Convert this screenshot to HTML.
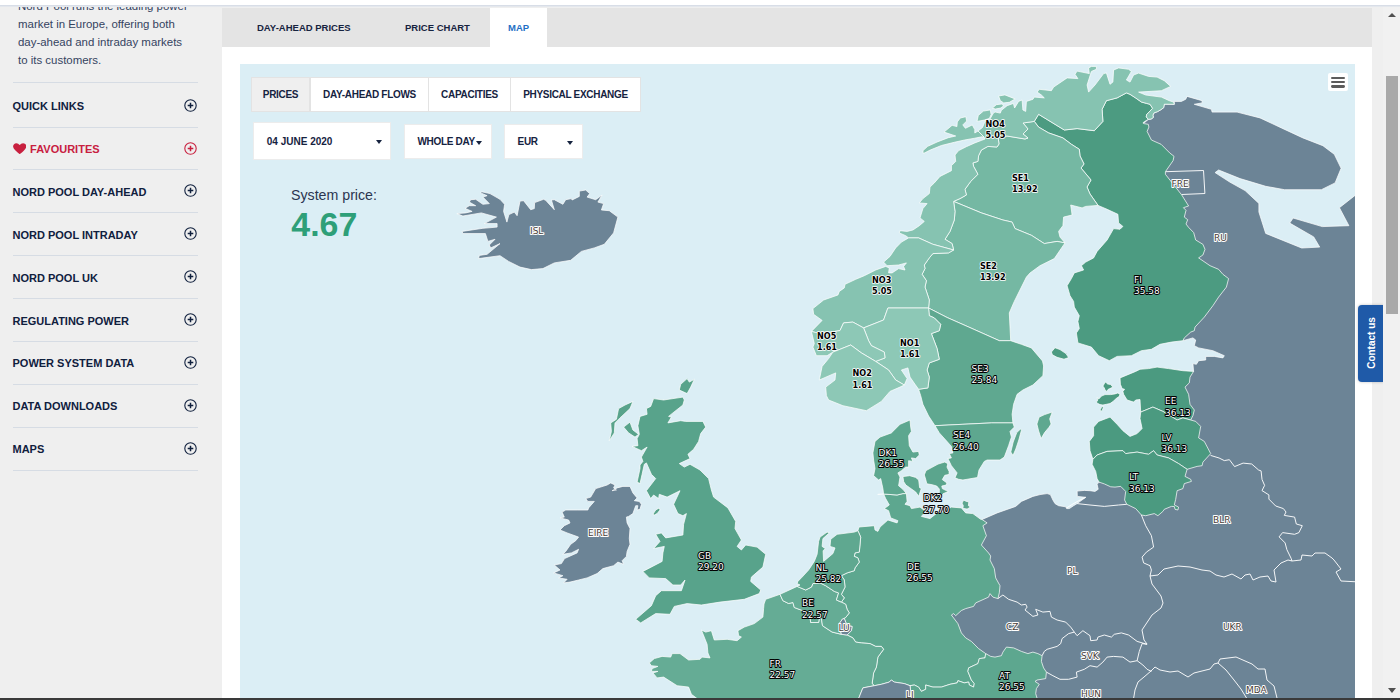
<!DOCTYPE html>
<html lang="en">
<head>
<meta charset="utf-8">
<title>Nord Pool - Map</title>
<style>
*{box-sizing:border-box;margin:0;padding:0}
html,body{width:1400px;height:700px;overflow:hidden;background:#efefef;font-family:"Liberation Sans",Arial,sans-serif}
#page{position:relative;width:1400px;height:700px;overflow:hidden;background:#efefef}
#topstrip{position:absolute;left:0;top:0;width:1400px;height:7px;background:linear-gradient(#fff 0,#fff 5px,#d3d9e4 5px,#dde2ea 6px,#ebedf0 7px);z-index:5}
#content{position:absolute;left:222px;top:8px;width:1150px;height:692px;background:#fff}
#tabbar{position:absolute;left:222px;top:8px;width:1150px;height:39px;background:#e4e4e4}
.tab{position:absolute;top:0;height:39px;line-height:40.4px;font-weight:bold;font-size:9.5px;color:#16233f;white-space:nowrap}
#tabmap{position:absolute;left:268px;top:0;width:57px;height:39px;background:#fff}
#side{position:absolute;left:0;top:0;width:222px;height:700px;background:#efefef;overflow:hidden}
#intro{position:absolute;left:18px;top:-3px;width:200px;font-size:11.45px;line-height:18px;color:#35435f}
.sdiv{position:absolute;left:12.5px;width:185px;height:1px;background:#d6dce4}
.sitem{position:absolute;left:12.5px;width:185px;height:14px}
.sitem span{position:absolute;left:0;top:0;line-height:14px;font-weight:bold;font-size:11px;color:#10203e;white-space:nowrap}
.sitem svg{position:absolute;left:171.2px;top:-0.4px}
#map{position:absolute;left:240px;top:64px;width:1115.3px;height:636px;background:#dbeef5;overflow:hidden}
.sub{position:absolute;top:76.5px;height:35px;line-height:34.6px;letter-spacing:-0.3px;background:#fff;border:1px solid #e3e3e3;font-weight:bold;font-size:10px;color:#16233f;text-align:center;white-space:nowrap}
.dd{position:absolute;height:36px;background:#fff;border:1px solid #ececec;font-weight:bold;font-size:10px;letter-spacing:-0.3px;color:#16233f;line-height:34px;white-space:nowrap}
.caret{position:absolute;top:16px;width:0;height:0;border-left:3.5px solid transparent;border-right:3.5px solid transparent;border-top:4px solid #16233f}
#sp1{position:absolute;left:291px;top:187.2px;font-size:14.2px;color:#2b3550;white-space:nowrap}
#sp2{position:absolute;left:291.3px;top:205.2px;font-size:33.9px;font-weight:bold;color:#2e9f78;white-space:nowrap}
#burger{position:absolute;left:1328px;top:73px;width:20px;height:18px;background:#fff;border-radius:2px}
#burger i{position:absolute;left:3px;width:14px;height:2.7px;background:#5c5c5c;border-radius:1.4px}
#sbar{position:absolute;left:1383px;top:6px;width:17px;height:694px;background:#f1f1f1}
#thumb{position:absolute;left:3.3px;top:69.5px;width:12px;height:238.5px;background:#a9a9a9}
.arr{position:absolute;left:4.5px;width:0;height:0;border-left:4px solid transparent;border-right:4px solid transparent}
#contact{position:absolute;left:1358.4px;top:305px;width:26px;height:77px;background:#1f5aa8;border-radius:4px 0 0 4px;box-shadow:0 0 3px rgba(0,0,0,.25)}
#contact span{position:absolute;left:13px;top:38px;transform:translate(-50%,-50%) rotate(-90deg);color:#fff;font-weight:bold;font-size:10px;white-space:nowrap}
#botbar{position:absolute;left:0;top:698px;width:1400px;height:2px;background:#3a3a3a;z-index:9}
svg#m{position:absolute;left:0;top:0}
svg#m path{stroke:#fff;stroke-opacity:.8;stroke-width:.9;stroke-linejoin:round}
svg#m .gb path{stroke-opacity:.92;stroke-width:1}
svg#m text{font-family:"DejaVu Sans Condensed","DejaVu Sans","Liberation Sans",sans-serif;font-size:9px;font-weight:bold;paint-order:stroke;stroke-linejoin:round}
svg#m .lw{fill:#fff;stroke:#000;stroke-width:2px;font-family:"DejaVu Sans",sans-serif;font-weight:normal}
svg#m .lb{fill:#000;stroke:#fff;stroke-width:1.6px}
svg#m .lg{fill:#4a4038;stroke:#fff;stroke-width:2px;font-family:"DejaVu Sans",sans-serif;font-weight:normal}
</style>
</head>
<body>
<div id="page">
 <div id="side">
  <div id="intro">Nord Pool runs the leading power<br>market in Europe, offering both<br>day-ahead and intraday markets<br>to its customers.</div>
  <div class="sdiv" style="top:81.5px"></div>
  <div class="sitem" style="top:99.10px"><span>QUICK LINKS</span><svg width="13" height="13" viewBox="0 0 13 13"><circle cx="6.5" cy="6.5" r="5.7" fill="none" stroke="#10203e" stroke-width="1.1"/><path d="M3.7 6.5h5.6M6.5 3.7v5.6" stroke="#10203e" stroke-width="1.5" fill="none"/></svg></div>
  <div class="sdiv" style="top:126.50px"></div>
  <div class="sitem" style="top:141.98px"><svg style="left:0;top:1px" width="13.4" height="11.4" viewBox="0 0 13 11"><path d="M6.5 10.8C2 7.4 0.1 5.3 0.1 3.2 0.1 1.4 1.5 0.1 3.2 0.1c1.3 0 2.5 0.7 3.3 1.9C7.3 0.8 8.5 0.1 9.8 0.1c1.7 0 3.1 1.3 3.1 3.1 0 2.1-1.9 4.2-6.4 7.6z" fill="#c8203f"/></svg><span style="left:17.6px;color:#c8203f">FAVOURITES</span><svg width="13" height="13" viewBox="0 0 13 13"><circle cx="6.5" cy="6.5" r="5.7" fill="none" stroke="#c8203f" stroke-width="1.1"/><path d="M3.7 6.5h5.6M6.5 3.7v5.6" stroke="#c8203f" stroke-width="1.5" fill="none"/></svg></div>
  <div class="sdiv" style="top:169.38px"></div>
  <div class="sitem" style="top:184.86px"><span>NORD POOL DAY-AHEAD</span><svg width="13" height="13" viewBox="0 0 13 13"><circle cx="6.5" cy="6.5" r="5.7" fill="none" stroke="#10203e" stroke-width="1.1"/><path d="M3.7 6.5h5.6M6.5 3.7v5.6" stroke="#10203e" stroke-width="1.5" fill="none"/></svg></div>
  <div class="sdiv" style="top:212.26px"></div>
  <div class="sitem" style="top:227.74px"><span>NORD POOL INTRADAY</span><svg width="13" height="13" viewBox="0 0 13 13"><circle cx="6.5" cy="6.5" r="5.7" fill="none" stroke="#10203e" stroke-width="1.1"/><path d="M3.7 6.5h5.6M6.5 3.7v5.6" stroke="#10203e" stroke-width="1.5" fill="none"/></svg></div>
  <div class="sdiv" style="top:255.14px"></div>
  <div class="sitem" style="top:270.62px"><span>NORD POOL UK</span><svg width="13" height="13" viewBox="0 0 13 13"><circle cx="6.5" cy="6.5" r="5.7" fill="none" stroke="#10203e" stroke-width="1.1"/><path d="M3.7 6.5h5.6M6.5 3.7v5.6" stroke="#10203e" stroke-width="1.5" fill="none"/></svg></div>
  <div class="sdiv" style="top:298.02px"></div>
  <div class="sitem" style="top:313.50px"><span>REGULATING POWER</span><svg width="13" height="13" viewBox="0 0 13 13"><circle cx="6.5" cy="6.5" r="5.7" fill="none" stroke="#10203e" stroke-width="1.1"/><path d="M3.7 6.5h5.6M6.5 3.7v5.6" stroke="#10203e" stroke-width="1.5" fill="none"/></svg></div>
  <div class="sdiv" style="top:340.90px"></div>
  <div class="sitem" style="top:356.38px"><span>POWER SYSTEM DATA</span><svg width="13" height="13" viewBox="0 0 13 13"><circle cx="6.5" cy="6.5" r="5.7" fill="none" stroke="#10203e" stroke-width="1.1"/><path d="M3.7 6.5h5.6M6.5 3.7v5.6" stroke="#10203e" stroke-width="1.5" fill="none"/></svg></div>
  <div class="sdiv" style="top:383.78px"></div>
  <div class="sitem" style="top:399.26px"><span>DATA DOWNLOADS</span><svg width="13" height="13" viewBox="0 0 13 13"><circle cx="6.5" cy="6.5" r="5.7" fill="none" stroke="#10203e" stroke-width="1.1"/><path d="M3.7 6.5h5.6M6.5 3.7v5.6" stroke="#10203e" stroke-width="1.5" fill="none"/></svg></div>
  <div class="sdiv" style="top:426.66px"></div>
  <div class="sitem" style="top:442.14px"><span>MAPS</span><svg width="13" height="13" viewBox="0 0 13 13"><circle cx="6.5" cy="6.5" r="5.7" fill="none" stroke="#10203e" stroke-width="1.1"/><path d="M3.7 6.5h5.6M6.5 3.7v5.6" stroke="#10203e" stroke-width="1.5" fill="none"/></svg></div>
  <div class="sdiv" style="top:469.54px"></div>
 </div>
 <div id="content"></div>
 <div id="tabbar">
  <div id="tabmap"></div>
  <div class="tab" style="left:35px">DAY-AHEAD PRICES</div>
  <div class="tab" style="left:183px">PRICE CHART</div>
  <div class="tab" style="left:286px;color:#1f6fc5">MAP</div>
 </div>
 <div id="map">
  <svg id="m" width="1116" height="636" viewBox="240 64 1116 636">
<path fill="#6c8496" d="M1174.3,104.3L1174.3,101.4 1181.4,101.4 1185.7,99.3 1187.1,96.4 1202.1,100.7 1202.1,102.9 1194.3,104.3 1211.4,109.3 1212.1,112.1 1237.1,112.1 1260,117.9 1281.4,127.9 1302.9,137.9 1322.9,145.7 1334.3,154.3 1341.1,168.3 1335.1,182.9 1321.4,189.7 1284.6,189.7 1265.7,186.3 1240,178.6 1218.6,170 1215.1,172.6 1229.7,182 1245.1,190.6 1258.9,203.4 1258.9,212 1265.7,233.4 1301.7,248 1319.7,247.1 1313.7,236.9 1289.7,223.1 1293.1,218 1322.3,226.6 1348.9,225.7 1339.4,207.7 1355.7,194.9 1362,190 1362,706 1030,706 1030,690 1000,675 940,645 940,610 975,585 970,540 982,519.5 997.1,512.9 1015.7,506.4 1021.4,501.4 1032.9,496.4 1040,494.6 1047.1,493.6 1050.4,494.6 1052.9,500 1055,503.6 1058.6,505.7 1065.7,506.8 1066.8,508.6 1069.3,508.6 1073.6,505.7 1077.1,503.6 1085.7,497.3 1077.3,496.4 1077.1,491.1 1084.3,490.4 1090,490.7 1095,491.4 1098.2,489.3 1097.1,484.3 1099,482.1 1130,470 1150,440 1165,395 1193.6,371.4 1192.9,363.6 1196.4,364.3 1198.6,360.7 1205.7,360 1205.7,356.4 1214.3,356.4 1222.9,357.9 1224.3,355.7 1212.9,350.7 1198.6,347.9 1194.3,345.7 1195.7,340 1192.9,337.9 1182.9,340.7 1150,300 1125,140 1148.3,119.3 1151.1,119.1 1153.4,117.4 1152.9,115.1 1154,112.9 1157.4,111.7 1160.9,109.7 1163.7,107.7 1164.3,104.2 1174.3,104.3Z"/>
<g fill="none" class="gb"><path d="M1077.1,503.6L1090,505 1104.3,506.4 1118.6,505 1126.8,504.3"/><path d="M1141.4,515L1145.7,525.7 1151.4,535.7 1153.6,547.1 1146.4,552.1 1142.1,557.1 1143.6,562.9 1150,565.7 1151.4,570 1150,576"/><path d="M1150,576L1158,575 1164,569 1178,566 1190,567 1202,570 1210,571 1216,575 1224,577 1232,574 1241,579 1245,575 1250,574 1253,580 1260,577 1268,576 1271,581 1276,582 1275,576 1274,570 1281,563 1288,560 1292,561"/><path d="M1150,576L1152,584 1161,596 1163,603 1161,608 1152,615 1142,630 1144,640 1147,644"/><path d="M997.9,598.6L1002.9,595 1008.6,599.3 1017.1,602.1 1021.4,605 1025.7,604.3 1027.1,607.1 1025,610 1032.9,616.4 1037.9,615 1035.7,609.3 1042.9,612.1 1050,611.4 1051.4,617.1 1057.1,620 1065.7,622.1 1070.7,627.1 1074.3,632.1"/><path d="M1074.3,632.1L1077.1,635.7 1082.9,630.7 1090,635.7 1090.7,640.7 1097.1,640 1097.9,637.1 1104.3,635 1111.4,637.1 1114.3,634.3 1121.4,632.9 1128.6,635 1137.1,641.4 1147.1,644.3"/><path d="M1042.1,655.7L1044.3,651.4 1047.1,649.3 1057.1,646.4 1060.7,643.6 1062.1,638.6 1068.6,633.6 1074.3,632.1"/><path d="M1046.4,672.1L1052.9,675.7 1060,679.3 1068.6,679.3 1077.1,677.1 1076.4,672.1 1084.3,669.3 1090,665.7 1097.1,667.1 1102.9,662.1 1107.1,657.1 1113.6,656.4 1122.9,657.1 1130,662.1 1137.1,660.7"/><path d="M1147.1,644.3L1142.1,643.6 1139.3,651.4 1137.1,660.7"/><path d="M1137.1,660.7L1142.9,665 1147.1,669.3 1151.4,671.4"/><path d="M1151,671L1155,667 1160,670 1170,672 1178,671 1188,677 1194,673 1210,669 1214,664 1218,663"/><path d="M1218,663L1220,659 1236,657 1252,664 1258,669 1265,669 1267,680 1274,686 1278,702"/><path d="M1218,663L1226,670 1234,680 1241,689 1249,702"/><path d="M1151,671L1144,677 1138,682 1135,690 1133,702"/><path d="M1210.6,455.4L1219.1,458 1224.3,460.6 1229.4,459.7 1234.6,466.6 1243.1,463.1 1251.7,464 1258.6,470 1261.1,470.9 1262,479.4 1264.6,485.4 1262,490.6 1268.9,494.9 1268.9,499.1 1275.7,506 1283.4,508.6 1286,512 1284.3,515.4 1294.6,517.1 1296.3,524 1302.3,525.7 1298.9,532.6 1294.6,534.3 1282.6,532.6 1279.1,536.9 1285.1,542.9 1286.9,549.7 1291.1,558.3 1292,561"/><path d="M1292,561L1301,560 1302,555 1312,556 1315,553 1325,553 1332,558 1334,560 1341,569 1336,572 1341,581 1360,582"/><path d="M1066.2,508.2L1072,504.5 1078.5,500.8 1085.7,497.3"/><path d="M877.6,494.4L883.6,494"/><path d="M1165.4,171.7L1203.5,170.5 1204.9,193.5 1181.7,194.5"/></g>
<path fill="#6c8496" d="M504.6,204.3L500,199.3 490,193.6 481.4,191.7 480.7,192.9 487.1,195.7 482.9,197.1 489.3,203.6 482.9,204.3 475.7,199.3 470.7,199.7 469.3,202.1 475.7,205.7 469.3,205.7 465,208.3 472.1,211.4 465.7,212.9 456.9,213.6 462.9,216 481.4,212.9 496.4,217.1 484.3,223.6 497.1,223.6 497.1,227.1 482.9,228.3 462.1,231.4 462.9,233.6 485.4,233.6 487.9,241.4 495,239.3 489.3,245 490.7,247.9 500,243.6 487.1,254.3 479.3,255.4 478.6,258.6 500,255.7 508.6,261.4 520,267.1 531.4,269.6 542.9,268.6 554.3,262.9 570.7,260.3 581.4,251.4 594.3,247.9 604.3,244.3 613.6,232.9 617.9,217.1 609.3,210.7 601.4,210 603.6,203.6 597.9,202.1 602.1,195 595.7,199.7 587.1,197.1 589.7,193.6 585.7,190 579.3,191.1 579.3,196.4 572.1,200 571.4,198.6 565.7,199.7 562.9,204.3 554.3,199.7 551.4,200 554.3,209.7 545.7,200.3 543.6,199.3 534.6,202.6 534.3,208.6 530.7,209.7 523.6,200.7 520,201.1 517.1,215.7 514.3,212.1 508.9,214.6 506.9,222.1 503.6,211.4Z"/>
<path fill="#6c8496" d="M607.1,485L610.7,482.9 615,485 613.6,487.9 616.4,490 612.1,490.7 617.1,487.9 622.9,486.4 630,486.4 632.9,492.9 637.1,497.9 634.3,500.7 639.3,501.4 641.4,504.3 640,509.3 637.1,510 637.9,505.7 635.7,505.7 632.9,513.6 628.6,516.4 626.4,517.1 627.1,522.9 630,528.6 629.3,538.6 630,544.3 627.1,551.4 626.4,556.4 622.1,560.7 623.6,564.3 617.9,562.1 613.6,565.7 602.9,568.6 597.1,573.6 587.1,577.9 578.6,580 570,582.1 563.6,582.9 567.1,579.3 558.6,577.9 562.9,575.7 553.6,572.9 560,570 554.3,565 561.4,563.6 564.5,558.6 577.1,552.9 578.6,549.3 571.4,552.9 562.9,554.3 565.7,551.4 570.7,544.3 575.7,540.7 578.6,537.1 567.1,532.9 560,530 564.3,525.7 570,522.9 568.6,520 560,517.9 564.3,517.1 562.1,512.1 565.7,510 577.1,510 587.9,510 588.6,507.9 594.3,501.4 587.9,501.4 585.7,498.6 590.7,497.1 595.7,488.6Z"/>
<path fill="#4c9b81" d="M1034.3,121.4L1038.6,127.1 1048.6,132.9 1062.9,137.9 1071.4,144.3 1079.3,149.3 1080,156 1084,164 1081,168 1091,180 1087,187 1090,194 1098,205.4 1107.1,209.3 1117.9,214.3 1118.6,222.9 1122.9,226.4 1120,229.3 1113.6,228.6 1107.1,240 1097.1,251.4 1093.6,257.9 1085.7,262.1 1081.4,265.7 1083.6,270 1074.3,272.9 1071.4,278.6 1067.1,285.7 1070,295.7 1073.6,301.4 1074.3,307.1 1079.3,315.7 1077.9,321.4 1079.3,328.6 1076.4,332.9 1077.9,342.9 1091.4,347.1 1098.6,355.7 1109.3,360.7 1117.1,356.4 1131.4,355.7 1141.4,350.7 1151.4,349.3 1160,344.3 1171.4,342.1 1182.9,340.7 1184.3,337.9 1190.7,332.1 1194.3,330.7 1195,327.1 1204.3,317.1 1212.9,305.7 1218.6,297.1 1226.4,287.1 1228.6,278.6 1222.9,274.3 1218.6,269.3 1210,265.7 1198.6,257.9 1202.9,255 1205,249.3 1202.9,244.3 1195.7,240 1193.7,232.6 1188.6,227.4 1186,224 1187.7,219.7 1184.3,217.1 1186,210.3 1183.4,207.7 1188.6,206 1181.7,194.9 1174.9,186.3 1165.4,174.3 1165.4,171.7 1173.1,160.6 1174,156.3 1169.7,152.9 1161.1,144.3 1151.4,140 1147.1,131.4 1148.9,127.1 1148.3,124.3 1144.3,123.7 1142.9,122.9 1144.3,121.7 1148.3,119.3 1146.3,116.9 1146.6,114.6 1149.1,112 1152.6,108.3 1150,104.3 1146.6,103.4 1141.4,102 1135.7,98 1130,94.3 1126.4,92.9 1117.1,97.9 1106.4,100.7 1102.1,109.3 1102.9,121.4 1094.3,130.7 1077.1,128.6 1064.3,130 1038.6,114.3 1034.3,121.4Z"/>
<path fill="#4b9a80" d="M1193.6,371.4L1182.9,370.7 1168.6,368.6 1157.1,367.1 1148.6,368.6 1140,369.3 1135.7,371.4 1120,377.9 1120.4,384.3 1122.1,388.6 1124.6,389.3 1122.9,391.4 1123.6,394.3 1127.1,400 1133.6,402.1 1135.7,400 1140,399.5 1140.7,412.1 1152.9,407.1 1162.9,411.4 1177.1,420 1182.9,417.9 1190.7,420 1192.9,415.7 1194.3,410 1190,404.3 1188.6,394.3 1185,387.1 1189.3,382.9 1190,377.1 1193.6,371.4Z"/>
<path fill="#4b9a80" d="M1140.7,412.1L1140,418.6 1142.1,428.6 1137.1,433.6 1130,436.4 1122.9,430.7 1117.1,424.3 1110,417.1 1098.6,421.4 1093.6,427.1 1093.6,435.7 1089.3,441.4 1090,450.7 1092.9,459.3 1097.1,455 1107.1,451.4 1122.9,450.7 1125.7,453.6 1137.1,452.1 1148.6,454.3 1153.6,450.7 1157.1,455 1168.6,457.9 1178.6,463.6 1187.1,469.3 1197.1,466.4 1202.1,465.7 1202.9,462.1 1210.7,453.6 1204.3,441.4 1198.6,437.9 1200.7,426.4 1195.7,421.4 1190.7,420 1182.9,417.9 1177.1,420 1162.9,411.4 1152.9,407.1 1140.7,412.1Z"/>
<path fill="#4b9a80" d="M1092.9,459.3L1092.1,464.3 1095.7,471.4 1097.1,478.6 1099,482.1 1104.3,483.9 1110.7,486.8 1115,487.1 1120.7,486.4 1125.7,491.4 1124.6,500 1126.8,504.3 1135.7,508.6 1141.4,515 1145.7,515.7 1154.3,513.6 1157.9,515.7 1162.9,511.4 1164.3,509.3 1171.4,506.4 1174.3,506.5 1175,509.3 1177.9,510 1178.6,507.1 1174.3,505 1175.7,499.3 1177.1,490.7 1182.9,488.6 1184.3,483.6 1191.4,481.4 1190.7,479.3 1185,476.4 1187.1,469.3 1178.6,463.6 1168.6,457.9 1157.1,455 1153.6,450.7 1148.6,454.3 1137.1,452.1 1125.7,453.6 1122.9,450.7 1107.1,451.4 1097.1,455 1092.9,459.3Z"/>
<path fill="#75b8a3" d="M1034.3,121.4L1023,123 1028,129 1023,134 1028,138 1025,139 1007,136 998,137 999,144 997,147 987.9,146.4 981.4,150 978.6,155.7 977.9,161.4 972.9,162.9 973.6,166.4 977.9,174.3 970.7,181.4 965,189.3 966.4,195 960,198.6 953.6,201.4 981.4,212.9 1002.9,220 1012.1,222.1 1015,228.6 1031.4,235.3 1044.3,243.6 1057.1,241.4 1065,242.9 1060,237.1 1058.6,231.4 1062.9,225.7 1063.6,217.1 1072.1,215 1070.7,205 1082.1,207.9 1085.7,206.4 1098,205.4 1090,194 1087,187 1091,180 1081,168 1084,164 1080,156 1079.3,149.3 1071.4,144.3 1062.9,137.9 1048.6,132.9 1038.6,127.1 1034.3,121.4Z"/>
<path fill="#75b8a3" d="M953.6,201.4L955,211.4 954.3,220 950,231.4 945,239.3 952.1,243.6 953.6,250 948.6,252.9 932.9,253.6 929.3,257.9 924.3,265 925,268.6 922.1,274.3 926.4,280.7 925,287.1 929.3,300 928.6,308 947.1,317.5 968.6,327 999.3,340.7 1010.7,340.7 1009.3,312.9 1014.3,301.4 1026.4,277.1 1030,273 1040,265.7 1054.3,258.6 1065,242.9 1057.1,241.4 1044.3,243.6 1031.4,235.3 1015,228.6 1012.1,222.1 1002.9,220 981.4,212.9 953.6,201.4Z"/>
<path fill="#5fa890" d="M928.6,308L947.1,317.5 968.6,327 999.3,340.7 1010.7,340.7 1021.4,344.3 1031.4,347.9 1042.5,361 1043.6,366 1042.9,375.7 1032.9,385 1022.9,390 1017.1,394.3 1013.6,404.3 1012.1,414.3 1012.9,422.9 991.4,422.9 962.9,424.3 935,425.7 928.6,416 922.9,404.3 920.7,395.7 918.6,389.3 927.9,387.9 929.3,377.1 927.1,370 929.3,362.9 939.3,359.3 937.1,348.6 931.4,333.6 939.3,330.7 940.7,324.3 934.3,317.9 929.3,315.7 928.6,308Z"/>
<path fill="#5ea78f" d="M935,425.7L962.9,424.3 991.4,422.9 1012.9,422.9 1014.3,427.1 1010,431.4 1011.4,437.1 1008.6,445.7 1004.3,457.1 1000,460 987.1,460 984.3,461.4 979,470 977.5,477.5 962.9,480 958.6,479.3 955,477.8 957.1,472.9 951.4,465.7 947.9,458.6 951.4,457.9 949.3,453.6 952.9,452.9 951.4,446.4 945.7,440 939.3,432.9 935,425.7Z"/>
<path fill="#86c3b1" d="M993.4,113.1L995.1,112 1000.3,113.1 1001.4,110.3 1007.1,105.7 1013.4,103.4 1014.6,108 1018.6,101.4 1022.1,100 1022.9,110 1025.7,111.4 1026.4,101.4 1032.9,99.3 1034.3,97.1 1044.3,97.9 1041.4,95 1037.1,92.1 1039.3,89.3 1051.4,90.7 1053.6,87.1 1067.1,77.9 1077.9,78.6 1075,74.3 1077.1,71.1 1089.3,73.6 1088.6,67.9 1091.4,66.4 1096.4,66.4 1096.4,69.3 1091.4,71.4 1087.1,85 1088.6,92.1 1095,85 1103.6,73.6 1106.4,72.9 1110,84.3 1112.9,82.1 1113.6,70 1118.6,67.9 1128.6,69.3 1131.4,71.4 1126.4,80 1130,82.1 1133.6,75 1138.6,73.1 1148.6,76.4 1157.1,77.1 1164.3,80.7 1170.7,86.4 1161.4,90.7 1138.6,92.1 1145.7,95 1161.4,97.1 1169.3,100.7 1173.6,102.1 1174.3,104.3 1164.3,104.2 1163.7,107.7 1160.9,109.7 1157.4,111.7 1154,112.9 1152.9,115.1 1153.4,117.4 1151.1,119.1 1148.3,119.3 1146.3,116.9 1146.6,114.6 1149.1,112 1152.6,108.3 1150,104.3 1146.6,103.4 1141.4,102 1135.7,98 1130,94.3 1126.4,92.9 1117.1,97.9 1106.4,100.7 1102.1,109.3 1102.9,121.4 1094.3,130.7 1077.1,128.6 1064.3,130 1038.6,114.3 1034.3,121.4 1023,123 1028,129 1023,134 1028,138 1025,139 1007,136 998,137 999,144 997,147 987.9,146.4 981.4,150 978.6,155.7 977.9,161.4 972.9,162.9 973.6,166.4 977.9,174.3 970.7,181.4 965,189.3 966.4,195 960,198.6 953.6,201.4 955,211.4 954.3,220 950,231.4 945,239.3 952.1,243.6 953.6,250 932.9,244.3 918.6,237.9 908.6,237.9 905.7,235.7 899.3,232.9 900,230.7 907.1,231.4 912.9,230 919.3,225.7 924.3,221.4 920,217.9 922.9,208.6 927.1,203.6 919.3,202.9 922.9,198.6 929.3,193.6 930,187.1 934.3,182.9 940,176.4 951.4,170.7 951.4,165.7 955.7,161.4 955,155 958.6,150.6 966.3,146.7 974.8,142.9 981.7,140.3 985.1,139 984,137 978,131 982.5,127.5 985,121.5 990,119 993.4,113.1Z"/>
<path fill="#86c3b1" d="M923,152L923,150.6 927.7,146.3 937.1,142 948.3,137.7 955.7,136 944,132.1 952.1,125.3 956.9,126.6 957.3,121.9 960.3,118 965.8,116.7 966.7,121 962.8,124.9 965.4,128.3 972.3,124.9 974.8,129.6 974.8,133 978,131 984,137 981.7,136.8 974.8,138.2 964.6,140 954.3,142.3 941.4,145.5 930.3,150 923.4,153.5Z"/>
<path fill="#86c3b1" d="M977,121.4L978.3,115.4 983.4,111.1 990.3,109.9 991.1,114.6 989.4,118.4 984.3,120.1Z"/>
<path fill="#86c3b1" d="M992.4,108.1L996.3,104.7 1002.3,103.9 1003.5,106 1000.5,108.1 995.4,109Z"/>
<path fill="#86c3b1" d="M998.6,96L1004.9,94.9 1015.1,98.9 1009.4,102.3 1003.7,102.9 1000.3,100.6Z"/>
<path fill="#86c3b1" d="M908.6,237.9L901.4,242.1 895.7,247.9 890,256.4 883.6,262.1 887.1,265.7 898.6,265 906.4,262.9 903.6,266.4 905,270 898.6,268.6 892.1,272.9 888.6,272.9 889.3,267.9 885.7,266.4 875.7,270 864.3,275.7 855.7,279.3 845,284.3 844.3,287.9 839.3,291.4 837.9,295 823.6,300 812.9,308.6 813.6,314.3 822.1,320.4 811.4,331.4 815.7,332.5 832,332 840,330.5 843.6,322.9 852.9,322.1 863.6,327.9 883.6,320 887.9,308 928.6,308 929.3,300 925,287.1 926.4,280.7 922.1,274.3 925,268.6 924.3,265 929.3,257.9 932.9,253.6 948.6,252.9 953.6,250 932.9,244.3 918.6,237.9 908.6,237.9Z"/>
<path fill="#8dc8b6" d="M928.6,308L887.9,308 883.6,320 863.6,327.9 868.6,340.7 871.4,345.7 884.3,352.1 885,357.9 875.7,361.4 888.6,370 895.7,380 904.3,385 907.1,378.6 901.4,370 907.9,367.9 910,377.1 915,384.3 918.6,389.3 927.9,387.9 929.3,377.1 927.1,370 929.3,362.9 939.3,359.3 937.1,348.6 931.4,333.6 939.3,330.7 940.7,324.3 934.3,317.9 929.3,315.7 928.6,308Z"/>
<path fill="#8dc8b6" d="M863.6,327.9L852.9,322.1 843.6,322.9 840,330.5 832,332 815.7,332.5 811.4,331.4 814.3,343.6 812.9,347.1 816.4,355.7 827.1,355.7 832.9,352.1 840,349.3 850.7,345 861.4,352.9 875.7,361.4 885,357.9 884.3,352.1 871.4,345.7 868.6,340.7 863.6,327.9Z"/>
<path fill="#8dc8b6" d="M832.9,352.1L840,349.3 850.7,345 861.4,352.9 875.7,361.4 888.6,370 895.7,380 904.3,385 900,387.1 890,391.4 881.4,401.4 866.4,410.7 842.9,405.7 828.6,400 826.4,395.7 825.7,387.1 835,380 835.7,372.9 819.3,380 822.1,366.4 828.6,358.6 832.9,352.1Z"/>
<path fill="#5da78f" d="M857.9,530.7L859,527 874.3,525.7 875,530 877.9,531.4 880,527.1 887.9,520 897.1,522.9 897.9,520.7 890.7,517.9 888.6,510.7 884.3,508.6 889.3,505 885.7,498.6 883.6,494 897.1,495 902.9,493.6 906.4,493.6 907.1,501.4 905,504.3 910,505.7 911.4,508.6 920,507.1 925.7,511.4 921.4,516.4 930,518.6 937.1,512.9 942.9,512.1 951.4,507.1 961.4,507.9 965.7,512.9 972.9,513.6 980.7,519.3 982,519.5 987.1,522.9 982.9,525.7 986.4,535.7 981.4,545 988.6,553 990.7,556 990,560 994.3,568.6 995.7,577.9 1000,585.7 999.3,592.9 997.9,598.6 992.9,597.1 990,593.6 988.6,597.1 975.7,602.9 973.6,606.4 965.7,608.6 961.4,610.5 955.7,615.7 953.6,613.6 951.4,615 957.9,623.6 961.4,632.9 965.7,637.9 971.4,641.4 978.6,648.6 985.7,653.6 985,657.9 979.3,658.6 977.9,663.6 968.6,667.9 967.9,671.4 971.4,680 974.3,683.6 973.6,687.1 969.3,685 968.6,682 964.3,682.9 957.9,680.7 957.1,682.9 950,684.3 941.4,687.1 932.9,687.1 925.7,685 925.7,689.3 921.4,691.4 918.6,687.1 914.3,685 910,685.7 904.3,683.6 894.3,682.1 891.4,680 889.3,682.1 881.4,684.3 874.3,685.7 872.1,683.6 873.6,672.9 876.4,667.1 877.9,657.1 883.6,649.3 881.4,646.4 875.7,646.4 870,643.6 861.4,642.9 855.7,642.1 852.9,637.9 847.1,635 851.4,630.7 852.1,626.4 847.1,625.7 844.3,618.6 842.5,619 845.7,617.5 849.3,612.9 847.1,609.3 845.7,604.3 841.4,602.1 844.3,597.9 841.4,594.3 845,587.1 844.3,580 841.4,575.7 847.1,572.9 854.3,570.7 855,567.9 859.3,562.1 857.9,557.9 854.3,556.4 855,552.9 859.3,552.1 860.7,537.1 857.9,530.7Z"/>
<path fill="#5da78f" d="M910,420L910.7,427.1 911.4,431.4 908.6,435.7 909.3,445.7 912.9,452.1 918.6,451.4 919.3,455 915.7,458.6 911.4,457.9 912.9,461.4 908.6,460.7 908.6,467.1 905.7,467.1 901.4,470.7 897.9,472.9 900,477.1 898.6,485.7 902.9,489.3 906.4,493.6 902.9,493.6 897.1,495 883.6,494 882.9,488.6 880.7,478.6 878.6,480 873.6,475.7 875,468.6 873.6,460 872.9,452.9 875,441.4 880,437.1 891.4,432.9 900,424.3Z"/>
<path fill="#5da78f" d="M902.9,476.6L909.7,475.7 915.7,477.4 918.7,480 919.6,487.7 921.3,488.6 918.7,496.3 915.7,492 909.7,487.7 905.9,485.1 903.7,481.7Z"/>
<path fill="#5ba58d" d="M924.3,474.9L926,470.6 938,464.1 944.8,462 947.8,463.7 947,467.1 949.1,471.4 949.1,474.4 944.8,475.3 942.3,479.6 947,483 946.1,485.1 941.8,486 942.3,488.6 948.3,491.6 943.1,493.7 941.4,496.7 938,499.3 936.3,496.7 939.3,492.8 939.3,489 936.7,486 932,484.7 926.8,483.8 925.6,479.1Z"/>
<path fill="#5da78f" d="M962,503.1L963.7,500.1 966.3,501.4 968.8,501.8 968.4,505.7 970.6,507 967.1,509.1 962.8,508.3 963.3,505.7Z"/>
<path fill="#5da78f" d="M910,704L910.7,691.4 910,685.7 914.3,685 918.6,687.1 921.4,691.4 925.7,689.3 925.7,685 932.9,687.1 941.4,687.1 950,684.3 957.1,682.9 957.9,680.7 964.3,682.9 968.6,682 969.3,685 973.6,687.1 974.3,683.6 971.4,680 967.9,671.4 968.6,667.9 977.9,663.6 979.3,658.6 985,657.9 985.7,653.6 990.7,656.4 995,657.1 1001.4,655.7 1002.9,652.1 1006.4,647.1 1013.6,647.9 1021.4,651.4 1027.9,653.6 1032.9,652.1 1037.9,653.6 1042.1,655.7 1041.4,661.4 1043.6,667.9 1046.4,672.1 1045.7,678.6 1037.1,680 1035,681.4 1039.3,684.3 1036.4,688.6 1035.7,693.6 1037.1,698.3 1037.5,704Z"/>
<path fill="#65ac95" d="M780,594.3L782.9,600.7 788.6,603.5 792.9,602.5 794.3,607.5 802.9,610.7 810,617.1 810.7,622.5 818.6,622.5 819.3,618.6 821.4,618.6 822.5,625.7 832,632 841.4,634.3 847.1,635 852.9,637.9 855.7,642.1 861.4,642.9 870,643.6 875.7,646.4 881.4,646.4 883.6,649.3 877.9,657.1 876.4,667.1 873.6,672.9 872.1,683.6 874.3,685.7 862.9,687.9 858.6,698.6 858,704 698,704 697.1,698.6 691.4,694.3 688.6,687.1 677.1,685.7 663.6,677.1 657.1,677.9 652.9,672.9 657.9,671.4 651.4,671.4 652.1,668.6 657.9,666.4 651.4,665.7 649.3,662.9 654.3,658.6 662.1,656.4 670.7,657.1 672.1,653.6 680,653.6 688.6,660 700,659.3 702.1,657.1 710,657.9 707.9,652.9 707.1,644.3 701.4,630 705.7,632.1 711.4,630.7 714.3,640 727.1,639.3 737.1,640.7 741.4,637.1 738.6,635.7 737.9,630.7 744.3,627.1 754.3,623.6 762.9,617.1 763.6,608.6 764,604 765.7,599.3Z"/>
<path fill="#65ac95" d="M797.1,586.4L780,594.3 782.9,600.7 788.6,603.5 792.9,602.5 794.3,607.5 802.9,610.7 810,617.1 810.7,622.5 818.6,622.5 819.3,618.6 821.4,618.6 822.5,625.7 832,632 841.4,634.3 840,628.6 839.3,623.6 842.5,619 845.7,617.5 849.3,612.9 847.1,609.3 845.7,604.3 841.4,602.1 836.4,600 838.6,592.9 834.3,591.4 825.7,585.7 820,582.9 812.9,583.6 811.4,587.1 805.7,590 797.1,586.4Z"/>
<path fill="#5fa890" d="M857.9,530.7L854.3,532.1 837.1,534.3 830.7,539.3 830,546.4 835,547.9 832.9,553.6 823.6,561.4 823.1,550.7 825.3,548.6 822.1,546.4 822.9,538.6 829.3,532.9 827.1,532.1 820,537.1 818.6,541.4 817.1,554.3 814.3,561.4 808.6,570 802.1,577.1 797.9,581.4 797.1,583.6 800,585 797.1,586.4 805.7,590 811.4,587.1 812.9,583.6 820,582.9 825.7,585.7 834.3,591.4 838.6,592.9 836.4,600 841.4,602.1 844.3,597.9 841.4,594.3 845,587.1 844.3,580 841.4,575.7 847.1,572.9 854.3,570.7 855,567.9 859.3,562.1 857.9,557.9 854.3,556.4 855,552.9 859.3,552.1 860.7,537.1 857.9,530.7Z"/>
<path fill="#58a38b" d="M653.6,398.6L663.6,400 682.9,397.1 684.3,400 682.9,405 672.9,412.9 668.6,416.4 671.4,417.1 667.9,422.9 680.7,420.7 685.7,421.4 702.9,421.4 705.7,427.1 700.7,433.6 698.6,441.4 693.6,449.3 687.9,454.3 690,458.6 679.3,463.6 684.3,467.1 690,464.3 700,470 708.6,478.6 711.4,490 713.6,497.1 727.9,507.9 735.7,521.4 735,528.6 741.4,540 737.1,546.4 741.4,550 745.7,545 757.1,547.1 765.7,554.3 762.9,567.1 751.4,577.1 750.7,581.4 760.7,590 759.3,593.6 744.3,599.3 720,602.1 701.4,605 687.1,603.6 674.3,606.4 670,614.3 655.7,613.6 640.7,622.9 635.7,619.3 651.4,605.7 655.7,595.7 661.4,590.7 681.4,590.7 685,580 680.7,585 672.9,585 665.7,578.6 649.3,577.9 642.9,571.4 662.1,561.4 662.9,552.9 664.3,546.4 653.6,548.6 660,541.4 655.7,534.3 661.4,532.9 665.7,537.9 682.9,535 683.6,524.3 686.4,513.6 682.9,515.7 677.9,513.6 673.6,504.3 680,490.7 667.1,497.1 659.3,494.3 658.6,498.6 653.6,495 650.7,498.6 646.4,490.7 655.7,478.6 651.4,474.3 646.4,462.9 644.3,464.3 642.1,474.3 640,483.6 637.1,482.1 640,468.6 640,465 642.9,461.4 641.4,457.1 647.1,447.1 641.4,450.7 632.1,446.4 637.9,445.7 637.1,438.6 639.3,434.3 637.9,425.7 640,416.4 647.1,414.3 646.4,408.6 650.7,406.4Z"/>
<path fill="#58a38b" d="M679.3,390L680.7,384.3 687.1,378.6 689.3,382.1 694.3,379.3 690.7,387.1 687.1,393.6Z"/>
<path fill="#58a38b" d="M632.9,401.4L630,408.6 620,417.9 615,422.9 614.3,432.9 609.3,440.7 611.4,431.4 610.7,422.9 616.4,419.3 618.6,408.6 625,405Z"/>
<path fill="#58a38b" d="M623.6,427.1L630,422.1 632.9,430 638.6,434.3 635,437.1 628.6,432.9Z"/>
<path fill="#58a38b" d="M652.9,514.3L655.7,510 659.3,507.9 660,510 657.1,513.6 654.3,515Z"/>
<path fill="#4c9b81" d="M1051.4,352L1055,347.7 1060,349.6 1066,353.6 1068.6,357.6 1064,359.2 1057,357.3 1052.4,354.8Z"/>
<path fill="#5ea78f" d="M1020.5,429L1021.5,430 1018.8,440 1015.8,449 1013,455.5 1010.8,452 1013.2,442 1016.8,432.5Z"/>
<path fill="#5fa890" d="M1052.3,412L1049.7,418.9 1051.1,424 1048.9,427.4 1044.6,432.6 1041.1,438.6 1038.6,430.9 1036.9,424 1039.1,417.1 1044.6,414.6Z"/>
<path fill="#4b9a80" d="M1102.9,386.1L1104.6,383.2 1105.7,382.1 1107.5,383.9 1110.7,384.6 1112.9,387.1 1110,388.6 1108.2,389.3 1106.8,391.4 1105,390 1104.3,387.9Z"/>
<path fill="#4b9a80" d="M1096.4,402.1L1097.9,400 1097.1,397.5 1098.9,398.9 1101.4,396.1 1105,394.6 1110.7,394.6 1115,393.9 1117.9,392.9 1120,394.6 1118.9,396.8 1116.4,398.2 1113.6,401.1 1110,403.6 1106.4,404.3 1102.9,405 1100,404.6 1097.9,403.6Z"/>
<path fill="#4b9a80" d="M1102.9,406.1L1103.2,407.9 1102.1,410.7 1100.4,411.4 1100.4,409.6 1101.4,407.5Z"/>
<path fill="#6c8496" d="M842.5,619L844.3,618.6 847.1,625.7 852.1,626.4 851.4,630.7 847.1,635 841.4,634.3 840,628.6 839.3,623.6 842.5,619Z"/>
<path fill="#6c8496" d="M858,704L858.6,698.6 862.9,687.9 874.3,685.7 881.4,684.3 889.3,682.1 891.4,680 894.3,682.1 904.3,683.6 910,685.7 910.7,691.4 910,704Z"/>
<text class="lg" x="530" y="234">ISL</text>
<text class="lb" x="985.5" y="126.5">NO4<tspan x="985.5" dy="11.5">5.05</tspan></text>
<text class="lb" x="1012" y="180.5">SE1<tspan x="1012" dy="11.5">13.92</tspan></text>
<text class="lg" x="1171.5" y="187">FRE</text>
<text class="lg" x="1214" y="240.5">RU</text>
<text class="lb" x="980" y="268.5">SE2<tspan x="980" dy="11.5">13.92</tspan></text>
<text class="lw" x="1134" y="282.5">FI<tspan x="1134" dy="11.5">35.58</tspan></text>
<text class="lb" x="872" y="282.5">NO3<tspan x="872" dy="11.5">5.05</tspan></text>
<text class="lb" x="817" y="338.5">NO5<tspan x="817" dy="11.5">1.61</tspan></text>
<text class="lb" x="900" y="345.5">NO1<tspan x="900" dy="11.5">1.61</tspan></text>
<text class="lb" x="852.5" y="376">NO2<tspan x="852.5" dy="11.5">1.61</tspan></text>
<text class="lw" x="971.5" y="371.5">SE3<tspan x="971.5" dy="11.5">25.84</tspan></text>
<text class="lw" x="1165" y="404">EE<tspan x="1165" dy="11.5">36.13</tspan></text>
<text class="lw" x="953" y="438">SE4<tspan x="953" dy="11.5">26.40</tspan></text>
<text class="lw" x="1161.5" y="440.5">LV<tspan x="1161.5" dy="11.5">36.13</tspan></text>
<text class="lw" x="878.5" y="455.5">DK1<tspan x="878.5" dy="11.5">26.55</tspan></text>
<text class="lw" x="1129" y="480">LT<tspan x="1129" dy="11.5">36.13</tspan></text>
<text class="lw" x="923.5" y="501">DK2<tspan x="923.5" dy="11.5">27.70</tspan></text>
<text class="lg" x="1213" y="523">BLR</text>
<text class="lg" x="588" y="536">EIRE</text>
<text class="lw" x="698" y="558.5">GB<tspan x="698" dy="11.5">29.20</tspan></text>
<text class="lw" x="907" y="569.5">DE<tspan x="907" dy="11.5">26.55</tspan></text>
<text class="lg" x="1067" y="573.5">PL</text>
<text class="lw" x="815.5" y="570.5">NL<tspan x="815.5" dy="11.5">25.82</tspan></text>
<text class="lw" x="802" y="606">BE<tspan x="802" dy="11.5">22.57</tspan></text>
<text class="lg" x="838.5" y="630.5">LU</text>
<text class="lg" x="1006" y="629.5">CZ</text>
<text class="lg" x="1223" y="629.5">UKR</text>
<text class="lg" x="1081" y="658.5">SVK</text>
<text class="lw" x="769.5" y="666.5">FR<tspan x="769.5" dy="11.5">22.57</tspan></text>
<text class="lw" x="999" y="678.5">AT<tspan x="999" dy="11.5">26.55</tspan></text>
<text class="lg" x="1246" y="693">MDA</text>
<text class="lg" x="1081" y="697">HUN</text>
<text class="lg" x="906" y="697.5">LI</text>
  </svg>
 </div>
 <div class="sub" style="left:251px;width:59px;background:#efefef;border-color:#e3e3e3">PRICES</div>
 <div class="sub" style="left:310px;width:119px">DAY-AHEAD FLOWS</div>
 <div class="sub" style="left:428px;width:83px">CAPACITIES</div>
 <div class="sub" style="left:510px;width:131px">PHYSICAL EXCHANGE</div>
 <div class="dd" style="left:253.2px;top:122.3px;width:137.4px;height:38px;line-height:37.4px;padding-left:12.6px;letter-spacing:0">04 JUNE 2020<i class="caret" style="left:121.5px;top:17px"></i></div>
 <div class="dd" style="left:404px;top:124.3px;width:87.6px;height:35px;line-height:33.8px;padding-left:12.4px">WHOLE DAY<i class="caret" style="left:71.3px;top:15.5px"></i></div>
 <div class="dd" style="left:504.4px;top:124.3px;width:78.4px;height:35px;line-height:33.8px;padding-left:12.2px">EUR<i class="caret" style="left:62px;top:15.5px"></i></div>
 <div id="sp1">System price:</div>
 <div id="sp2">4.67</div>
 <div id="burger"><i style="top:3.7px"></i><i style="top:7.8px"></i><i style="top:11.9px"></i></div>
 <div id="contact"><span>Contact us</span></div>
 <div id="sbar"><div class="arr" style="top:7px;border-bottom:4.5px solid #505050"></div><div id="thumb"></div><div class="arr" style="top:682px;border-top:5px solid #505050"></div></div>
 <div id="topstrip"></div>
 <div id="botbar"></div>
</div>
</body>
</html>
